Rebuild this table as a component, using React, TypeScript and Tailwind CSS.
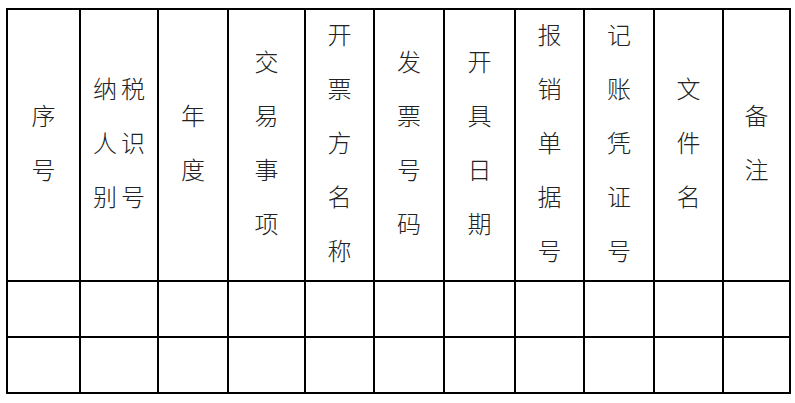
import React from "react";

const headers: string[][] = [
  ["序", "号"],
  ["纳税", "人识", "别号"],
  ["年", "度"],
  ["交", "易", "事", "项"],
  ["开", "票", "方", "名", "称"],
  ["发", "票", "号", "码"],
  ["开", "具", "日", "期"],
  ["报", "销", "单", "据", "号"],
  ["记", "账", "凭", "证", "号"],
  ["文", "件", "名"],
  ["备", "注"],
];

export default function App() {
  return (
    <div className="w-[795px] h-[403px] bg-white overflow-hidden">
      <div
        className="ml-[6px] mt-[8px] w-[785px] h-[386px] bg-black p-[2px] grid gap-[2px] grid-cols-[71px_76px_68px_75px_67px_68px_69px_67px_68px_67px_65px] grid-rows-[270px_54px_54px] text-[24px] leading-[54px] text-[#222] font-light"
        style={{ fontFamily: '"Noto Sans CJK SC", "Noto Sans", sans-serif' }}
      >
        {headers.map((lines, i) => (
          <div key={`h${i}`} className="bg-white flex flex-col items-center justify-center pb-[7px]">
            {lines.map((l, j) => (
              <div key={j} className="flex gap-[4px] whitespace-nowrap">
                {Array.from(l).map((ch, k) => (
                  <span key={k}>{ch}</span>
                ))}
              </div>
            ))}
          </div>
        ))}
        {Array.from({ length: 22 }).map((_, i) => (
          <div key={`c${i}`} className="bg-white" />
        ))}
      </div>
    </div>
  );
}
